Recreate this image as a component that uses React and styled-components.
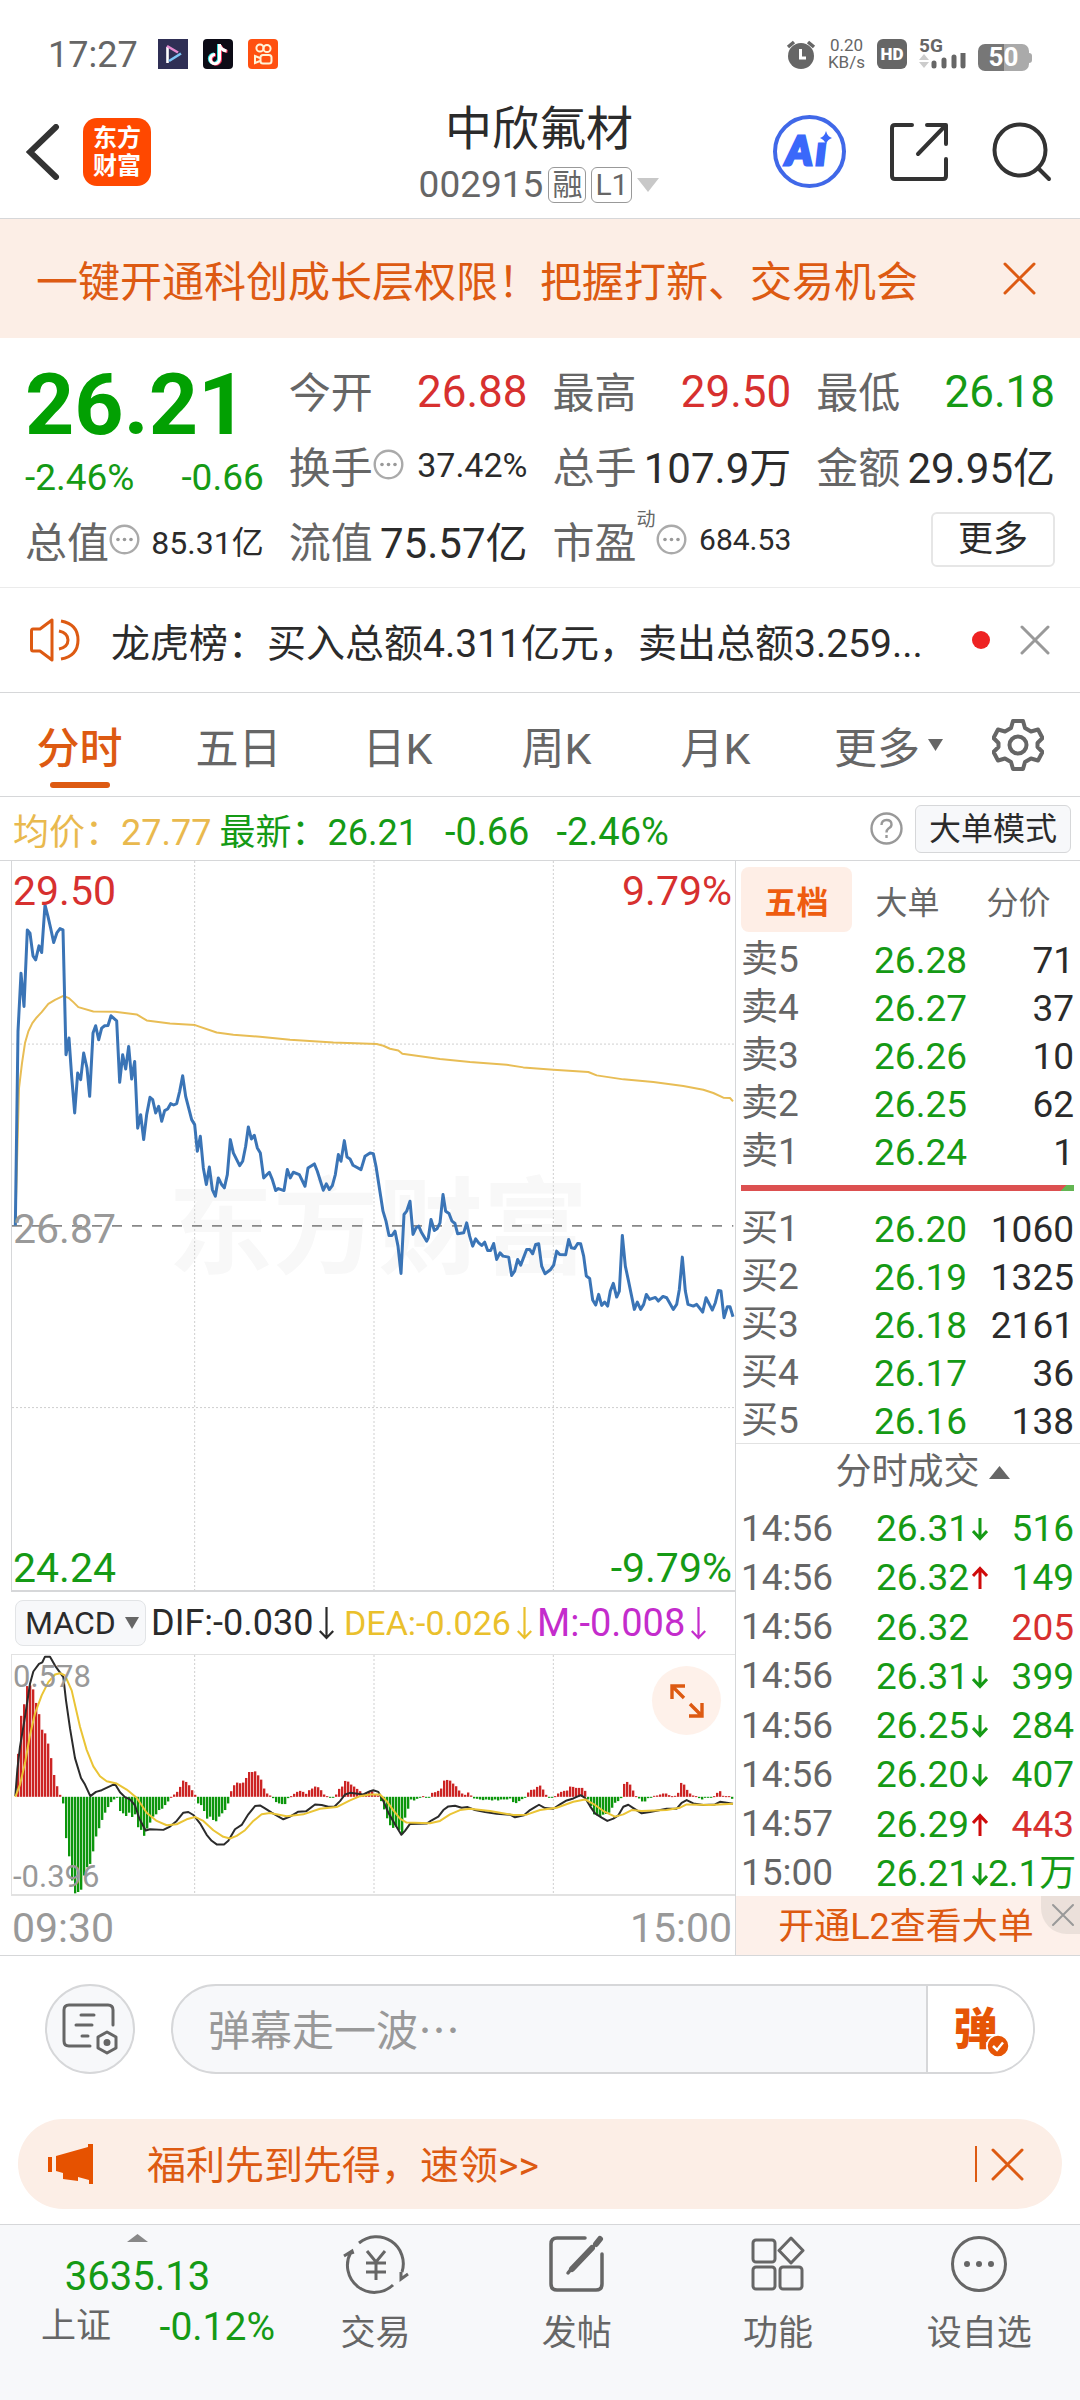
import React from 'react';
import styled, { createGlobalStyle, css } from 'styled-components';

const C = {
  green: '#159a15',
  red: '#d7302f',
  orange: '#dd5a12',
  ink: '#2b2b2b',
  grey: '#666',
  pale: '#999',
  line: '#d6d7d9',
  soft: '#fceee6',
  field: '#f7f8fa',
  gold: '#e9b94e',
};

const Global = createGlobalStyle`
  *, *::before, *::after { box-sizing: border-box; }
  body {
    margin: 0;
    background: #fff;
    color: ${C.ink};
    font-family: Roboto, "Noto Sans CJK SC", sans-serif;
  }
  button, input, select {
    font-family: inherit;
    margin: 0;
    padding: 0;
    border: 0;
    background: none;
    color: inherit;
  }
  svg { display: block; flex: none; }
`;

const Page = styled.div`
  min-height: 100vh;
  display: flex;
  flex-direction: column;
  white-space: nowrap;
`;

/* ---------- status bar ---------- */
const StatusBar = styled.div`
  display: flex;
  align-items: center;
  height: 30px;
  margin-top: 39px;
  padding: 0 48px;
  color: ${C.grey};
`;
const Clock = styled.span`
  font-size: 36px;
  line-height: 34px;
  margin-right: 20px;
  padding-top: 2px;
`;
const StatusApps = styled.div`
  display: flex;
  gap: 15px;
  flex: 1;
`;
const StatusInfo = styled.div`
  display: flex;
  align-items: center;
  gap: 12px;
`;
const Speed = styled.div`
  display: flex;
  flex-direction: column;
  align-items: center;
  font-size: 17px;
  line-height: 17px;
`;
const HdBadge = styled.span`
  width: 30px;
  height: 30px;
  border-radius: 6px;
  background: ${C.grey};
  color: #fff;
  font-size: 17px;
  font-weight: 900;
  line-height: 30px;
  text-align: center;
`;
const Signal = styled.div`
  display: flex;
  flex-direction: column;
  width: 47px;
  height: 30px;
  font-size: 19px;
  font-weight: 700;
  line-height: 14px;
`;
const Battery = styled.div`
  display: flex;
  align-items: center;
  align-self: flex-end;
  &::after {
    content: '';
    width: 3px;
    height: 10px;
    border-radius: 0 3px 3px 0;
    background: #aaa;
  }
`;
const BatteryBody = styled.span`
  width: 51px;
  height: 27px;
  border-radius: 7px;
  background: linear-gradient(to right, #777 50%, #aaa 50%);
  color: #fff;
  font-size: 26px;
  font-weight: 700;
  line-height: 27px;
  text-align: center;
`;

/* ---------- title bar ---------- */
const NavBar = styled.header`
  display: grid;
  grid-template-columns: 1fr auto 1fr;
  align-items: center;
  height: 150px;
  padding: 16px 28px 0 26px;
  border-bottom: 1px solid ${C.line};
`;
const NavSide = styled.div`
  display: flex;
  align-items: center;
  gap: ${p => p.$gap}px;
  justify-content: ${p => (p.$end ? 'flex-end' : 'flex-start')};
`;
const IconButton = styled.button`
  display: flex;
  align-items: center;
  justify-content: center;
  flex: none;
`;
const Brand = styled.div`
  width: 68px;
  height: 68px;
  border-radius: 14px;
  background: #ff4800;
  color: #fff;
  font-size: 24px;
  font-weight: 700;
  line-height: 28px;
  padding-top: 6px;
  text-align: center;
  white-space: normal;
`;
const TitleBlock = styled.div`
  display: flex;
  flex-direction: column;
  align-items: center;
  gap: 12px;
`;
const Title = styled.h1`
  margin: 0;
  padding-top: 3px;
  font-size: 47px;
  font-weight: 400;
  line-height: 52px;
`;
const CodeRow = styled.div`
  display: flex;
  align-items: center;
  gap: 5px;
  font-size: 37px;
  line-height: 36px;
  color: ${C.grey};
`;
const Tag = styled.span`
  height: 36px;
  padding: 0 3px;
  border: 1px solid ${C.pale};
  border-radius: 6px;
  font-size: 30px;
  line-height: 33px;
`;

/* ---------- banner ---------- */
const Banner = styled.div`
  display: flex;
  align-items: center;
  justify-content: space-between;
  height: 119px;
  padding: 0 44px 0 36px;
  background: ${C.soft};
  color: ${C.orange};
  font-size: 42px;
`;

/* ---------- quote ---------- */
const Quote = styled.section`
  display: grid;
  grid-template-columns: repeat(4, 1fr);
  grid-template-rows: repeat(3, 75px);
  column-gap: 25px;
  padding: 14px 25px 10px;
  border-bottom: 1px solid #ebebeb;
`;
const PriceBlock = styled.div`
  grid-row: span 2;
  padding-top: 2px;
  color: ${C.green};
`;
const Price = styled.div`
  padding-top: 2px;
  color: #02a002;
  font-size: 86px;
  font-weight: 700;
  line-height: 98px;
`;
const Change = styled.div`
  display: flex;
  justify-content: space-between;
  font-size: 37px;
  line-height: 48px;
`;
const Stat = styled.div`
  display: flex;
  align-items: center;
  min-width: 0;
`;
const StatLabel = styled.span`
  font-size: 42px;
  color: ${C.grey};
`;
const Sup = styled.sup`
  align-self: flex-start;
  margin-top: 8px;
  font-size: 19px;
  line-height: 20px;
  color: ${C.grey};
`;
const StatValue = styled.span`
  margin-left: auto;
  padding-top: ${p => (p.$size === 44 ? 4 : 0)}px;
  font-size: ${p => p.$size}px;
  color: ${p => p.$color || C.ink};
`;
const MoreButton = styled.button`
  justify-self: end;
  align-self: center;
  width: 124px;
  height: 55px;
  border: 2px solid #e6e6e6;
  border-radius: 6px;
  font-size: 35px;
  line-height: 48px;
`;

/* ---------- notice ---------- */
const Notice = styled.div`
  display: flex;
  align-items: center;
  height: 105px;
  padding: 0 30px;
  border-bottom: 1px solid ${C.line};
`;
const NoticeText = styled.span`
  flex: 1;
  margin-left: 29px;
  font-size: 39px;
`;
const Dot = styled.span`
  width: 18px;
  height: 18px;
  margin-right: 30px;
  border-radius: 50%;
  background: #ee2222;
`;

/* ---------- period tabs ---------- */
const Tabs = styled.nav`
  display: flex;
  height: 104px;
  padding-right: 12px;
  border-bottom: 1px solid ${C.line};
`;
const Tab = styled.button`
  position: relative;
  flex: 1;
  display: flex;
  align-items: center;
  justify-content: center;
  gap: 8px;
  font-size: 43px;
  color: ${C.grey};
  ${p => p.$menu && css`
    padding-left: 14px;
  `}
  ${p => p.$active && css`
    font-weight: 500;
    color: ${C.orange};
    &::after {
      content: '';
      position: absolute;
      bottom: 8px;
      left: 50%;
      width: 60px;
      height: 6px;
      margin-left: -30px;
      border-radius: 3px;
      background: ${C.orange};
    }
  `}
`;
const GearButton = styled(IconButton)`
  width: 100px;
`;

const InfoRow = styled.div`
  display: flex;
  align-items: center;
  height: 64px;
  padding: 0 9px 0 13px;
  border-bottom: 1px solid ${C.line};
  font-size: 36px;
  color: ${C.green};
`;
const Avg = styled.span`
  color: ${C.gold};
  margin-right: 8px;
`;
const Latest = styled.span`
  display: flex;
  align-items: baseline;
  gap: 27px;
  flex: 1;
`;
const Delta = styled.span`
  font-size: 38px;
`;
const ModeButton = styled.button`
  width: 156px;
  height: 48px;
  margin-left: 12px;
  border: 1px solid ${C.line};
  border-radius: 6px;
  background: ${C.field};
  color: ${C.ink};
  font-size: 32px;
  line-height: 44px;
`;

/* ---------- main ---------- */
const Main = styled.main`
  display: flex;
  border-bottom: 1px solid ${C.line};
`;
const ChartColumn = styled.section`
  flex: 1;
  min-width: 0;
  padding-left: 11px;
  border-right: 1px solid ${C.line};
`;
const PriceChart = styled.div`
  position: relative;
  height: 731px;
  border-left: 1px solid ${C.line};
  border-bottom: 2px solid ${C.line};
`;
const MacdChart = styled.div`
  position: relative;
  height: 242px;
  border: 1px solid #e2e2e2;
  border-right: 0;
  border-bottom-width: 2px;
`;
const Plot = styled.svg`
  position: relative;
  width: 100%;
  height: 100%;
`;
const Watermark = styled.div`
  position: absolute;
  left: 156px;
  top: 309px;
  font-size: 105px;
  font-weight: 700;
  line-height: 120px;
  color: #f8f8f8;
`;
const AxisLabel = styled.span`
  position: absolute;
  ${p => p.$side}: ${p => (p.$side === 'left' ? 1 : 3)}px;
  ${p => (p.$bottom === undefined ? `top: ${p.$top}px` : `bottom: ${p.$bottom}px`)};
  font-size: ${p => p.$size || 41}px;
  line-height: 40px;
  color: ${p => p.$color || C.pale};
`;
const MacdRow = styled.div`
  display: grid;
  grid-template-columns: 134px 193px 193px 1fr;
  align-items: center;
  height: 62px;
  padding-left: 4px;
`;
const SelectBox = styled.label`
  position: relative;
  display: block;
  svg { position: absolute; right: 10px; top: 17px; pointer-events: none; }
`;
const Select = styled.select`
  appearance: none;
  width: 131px;
  height: 46px;
  padding-left: 9px;
  border: 1px solid #e2e4e6;
  border-radius: 8px;
  background: ${C.field};
  color: ${C.ink};
  font-size: 32px;
  line-height: 44px;
`;
const Indicator = styled.span`
  display: flex;
  align-items: center;
  gap: 6px;
  padding-left: 2px;
  font-size: ${p => p.$size}px;
  color: ${p => p.$color};
`;
const ExpandButton = styled(IconButton)`
  position: absolute;
  right: 14px;
  top: 11px;
  width: 69px;
  height: 69px;
  border-radius: 50%;
  background: #fef1ea;
`;
const TimeAxis = styled.div`
  display: flex;
  justify-content: space-between;
  align-items: center;
  height: 59px;
  padding: 4px 3px 0 1px;
  font-size: 41px;
  line-height: 50px;
  color: ${C.pale};
`;

/* ---------- order book ---------- */
const BookColumn = styled.aside`
  width: 344px;
  display: flex;
  flex-direction: column;
`;
const BookTabs = styled.div`
  display: grid;
  grid-template-columns: 111px 111px 111px;
  padding: 6px 0 2px 5px;
`;
const BookTab = styled.button`
  height: 65px;
  border-radius: 8px;
  font-size: 32px;
  color: ${C.grey};
  ${p => p.$active && css`
    background: #feeee6;
    color: #ee5c10;
    font-weight: 700;
  `}
`;
const Table = styled.table`
  width: 100%;
  height: ${p => p.$height}px;
  border-collapse: collapse;
  table-layout: fixed;
  font-size: 37px;
  line-height: 40px;
`;
const Cell = styled.td`
  padding: 5px 0 0;
  width: ${p => p.$width}px;
  text-align: right;
  color: ${p => p.$color || C.ink};
`;
const HeadCell = styled.th`
  width: 101px;
  padding: 4px 0 0 5px;
  font-size: 37px;
  font-weight: 400;
  text-align: left;
  color: ${C.grey};
`;
const VolumeCell = styled(Cell)`
  padding-right: 6px;
`;
const Ratio = styled.div`
  height: 6px;
  margin: 11px 6px 12px 5px;
  background: linear-gradient(135deg, #dc5050 96%, #63b552 96%);
`;
const TradesTitle = styled.button`
  display: flex;
  align-items: center;
  justify-content: center;
  gap: 9px;
  height: 59px;
  padding: 0 0 2px 29px;
  border-top: 1px solid #e2e2e2;
  font-size: 36px;
  line-height: 50px;
  color: ${C.grey};
`;
const PriceWithArrow = styled.span`
  display: flex;
  align-items: center;
  justify-content: flex-end;
  gap: 3px;
`;
const ArrowSlot = styled.span`
  width: 16px;
`;
const Level2 = styled.div`
  position: relative;
  flex: 1;
  display: flex;
  background: #fdf0ea;
`;
const Level2Link = styled.a`
  flex: 1;
  padding: 4px 4px 0 0;
  color: ${C.orange};
  font-size: 36px;
  line-height: 55px;
  text-align: center;
  text-decoration: none;
`;
const Level2Close = styled(IconButton)`
  position: absolute;
  top: 0;
  right: 0;
  width: 39px;
  height: 38px;
  padding-left: 4px;
  border-bottom-left-radius: 26px;
  background: #ebe0da;
`;

/* ---------- comments ---------- */
const CommentRow = styled.form`
  display: flex;
  gap: 36px;
  padding: 28px 45px 45px;
`;
const RoundButton = styled(IconButton)`
  width: 90px;
  height: 90px;
  border: 2px solid ${C.line};
  border-radius: 50%;
  background: ${C.field};
`;
const CommentField = styled.div`
  flex: 1;
  display: flex;
  height: 90px;
  border: 2px solid ${C.line};
  border-radius: 45px;
  background: ${C.field};
  overflow: hidden;
`;
const CommentInput = styled.input`
  flex: 1;
  min-width: 0;
  padding: 0 0 3px 35px;
  font-family: "Noto Sans CJK SC", sans-serif;
  font-size: 42px;
  outline: 0;
  &::placeholder { color: ${C.pale}; opacity: 1; }
`;
const BulletToggle = styled.button`
  position: relative;
  width: 107px;
  padding: 0 10px 6px 0;
  border-left: 2px solid ${C.line};
  background: #fff;
  color: #e65506;
  font-size: 44px;
  font-weight: 900;
  svg { position: absolute; left: 58px; top: 48px; }
`;

const Promo = styled.div`
  display: flex;
  align-items: center;
  height: 90px;
  margin: 0 18px 15px;
  padding: 0 38px 0 30px;
  border-radius: 45px;
  background: ${C.soft};
  color: ${C.orange};
  font-size: 39px;
`;
const PromoText = styled.span`
  flex: 1;
  margin-left: 53px;
  padding-bottom: 4px;
`;
const Divider = styled.span`
  width: 2px;
  height: 36px;
  margin-right: 14px;
  background: ${C.orange};
`;

/* ---------- bottom bar ---------- */
const BottomBar = styled.footer`
  flex: 1;
  display: grid;
  grid-template-columns: 275px repeat(4, 1fr);
  border-top: 1px solid ${C.line};
  background: ${C.field};
  color: ${C.grey};
`;
const IndexBlock = styled.div`
  display: flex;
  flex-direction: column;
  align-items: center;
  padding-top: 9px;
  color: ${C.green};
`;
const IndexValue = styled.div`
  margin-top: 10px;
  font-size: 40px;
  line-height: 50px;
`;
const IndexRow = styled.div`
  display: flex;
  align-items: center;
  justify-content: space-between;
  align-self: stretch;
  padding-left: 41px;
  font-size: 39px;
  line-height: 50px;
`;
const IndexName = styled.span`
  font-size: 35px;
  color: ${C.grey};
`;
const NavItem = styled.button`
  display: flex;
  flex-direction: column;
  align-items: center;
  gap: 15px;
  padding-top: 9px;
  font-size: 35px;
  line-height: 50px;
`;

/* ---------- icons ---------- */
const Cross = ({ size, width = 3, color = 'currentColor' }) => (
  <svg width={size} height={size} viewBox={`0 0 ${size} ${size}`} stroke={color} strokeWidth={width} strokeLinecap="round">
    <path d={`M2 2L${size - 2} ${size - 2}M${size - 2} 2L2 ${size - 2}`} />
  </svg>
);
const Triangle = ({ w, h, up, color = C.grey }) => (
  <svg width={w} height={h} viewBox="0 0 10 10" preserveAspectRatio="none" fill={color}>
    <path d={up ? 'M0 10L5 0L10 10Z' : 'M0 0H10L5 10Z'} />
  </svg>
);
const Ellipsis = () => (
  <svg width="31" height="31" viewBox="0 0 31 31" fill="none" stroke="#aaa" strokeWidth="2.4">
    <circle cx="15.5" cy="15.5" r="13.8" />
    <g fill="#999" stroke="none">
      <circle cx="9" cy="15.5" r="1.8" /><circle cx="15.5" cy="15.5" r="1.8" /><circle cx="22" cy="15.5" r="1.8" />
    </g>
  </svg>
);
const LongArrow = () => (
  <svg width="15" height="33" viewBox="0 0 15 33" fill="none" stroke="currentColor" strokeWidth="2.2">
    <path d="M7.5 0V31M0.8 24L7.5 31L14.2 24" />
  </svg>
);
const TickArrow = ({ dir }) => (
  <svg width="16" height="24" viewBox="0 0 16 24" fill="none" stroke={dir === 'up' ? '#cf0a0a' : C.green} strokeWidth="3">
    <path d={dir === 'up' ? 'M8 23V3M1 10L8 2.5L15 10' : 'M8 1V21M1 14L8 21.5L15 14'} />
  </svg>
);

/* ---------- data ---------- */
const priceLine = '46,1129 54,545 63,370 72,470 82,240 90,250 99,318 107,330 117,288 125,308 135,165 144,200 152,235 161,278 171,248 180,236 189,240 198,615 207,565 215,680 224,790 233,670 242,690 251,610 261,655 269,740 279,550 287,528 296,570 305,535 314,528 324,527 333,498 350,513 359,698 368,615 377,658 386,590 395,688 404,635 413,836 422,795 431,870 440,795 450,743 458,750 467,790 476,770 485,815 494,783 503,778 512,762 521,766 530,762 539,725 548,678 557,740 575,810 584,825 592,905 601,860 610,955 619,1005 628,952 637,1020 646,1040 655,985 665,1005 673,1015 682,975 691,870 700,910 719,948 728,935 737,890 745,832 754,868 763,857 772,895 781,910 791,985 808,968 817,990 827,1023 835,1017 852,1023 862,960 871,985 880,968 898,975 915,1010 924,955 943,943 952,965 970,1022 979,1003 988,1020 997,1008 1006,975 1015,915 1023,935 1033,873 1041,922 1050,928 1059,947 1083,960 1095,920 1110,910 1120,912 1128,950 1142,1040 1149,1085 1158,1115 1167,1158 1176,1158 1185,1145 1194,1190 1203,1272 1212,1095 1220,1085 1230,1055 1239,1155 1248,1135 1256,1130 1265,1150 1280,1175 1285,1165 1293,1110 1303,1143 1311,1138 1320,1120 1329,1035 1337,1085 1347,1092 1356,1115 1365,1122 1373,1153 1391,1150 1400,1120 1409,1160 1418,1190 1427,1168 1436,1180 1445,1188 1454,1178 1463,1203 1472,1203 1481,1182 1490,1230 1500,1210 1509,1220 1526,1223 1535,1278 1544,1265 1553,1230 1562,1247 1580,1200 1589,1200 1598,1213 1607,1185 1616,1183 1625,1250 1635,1273 1652,1260 1661,1247 1670,1205 1679,1215 1697,1216 1706,1170 1714,1195 1724,1197 1733,1182 1742,1183 1751,1220 1759,1280 1769,1287 1778,1352 1787,1367 1796,1335 1805,1368 1814,1358 1823,1370 1831,1325 1840,1302 1850,1343 1858,1325 1867,1158 1876,1250 1885,1292 1903,1380 1912,1358 1922,1380 1931,1365 1939,1335 1949,1350 1966,1344 1975,1355 1989,1341 2000,1345 2020,1380 2030,1365 2038,1320 2047,1223 2056,1325 2064,1365 2080,1370 2090,1365 2108,1388 2118,1345 2137,1382 2146,1360 2155,1323 2163,1325 2172,1405 2182,1372 2190,1372 2199,1402';
const avgLine = '46,1129 57,715 66,640 75,580 85,545 97,520 110,503 125,487 145,462 165,450 190,438 207,445 220,457 235,472 280,485 345,486 410,494 440,512 510,521 585,526 650,548 700,555 780,561 870,570 1000,578 1130,583 1150,588 1170,597 1195,602 1207,612 1320,628 1410,637 1520,645 1570,653 1660,660 1765,667 1790,677 1870,689 1960,697 2050,709 2110,720 2140,730 2170,744 2190,745 2199,755';
const difLine = '46,770 52,690 60,620 75,530 90,430 100,393 117,370 127,365 135,348 150,348 165,375 190,410 198,480 210,565 225,655 243,715 255,735 271,770 288,757 305,752 345,733 360,758 375,773 390,780 405,798 418,838 437,874 450,870 490,872 510,862 530,845 550,820 565,818 580,827 600,852 620,887 635,905 650,916 672,916 685,905 705,870 725,857 745,825 765,800 780,798 795,807 815,820 850,840 870,832 895,817 918,816 945,795 965,797 985,802 1003,802 1020,785 1035,765 1050,760 1090,765 1110,755 1120,752 1135,757 1150,785 1165,820 1185,855 1204,887 1215,875 1230,854 1280,853 1295,843 1315,832 1330,812 1345,801 1365,799 1385,805 1403,803 1425,812 1455,818 1490,823 1530,826 1545,834 1572,828 1590,812 1605,803 1617,796 1635,806 1660,808 1680,795 1700,783 1720,777 1742,767 1755,775 1770,800 1785,822 1805,835 1822,845 1840,838 1855,828 1870,802 1885,796 1900,806 1925,822 1950,818 2000,808 2030,808 2045,790 2060,782 2080,792 2110,797 2145,795 2160,787 2180,790 2199,793';
const deaLine = '46,772 60,735 75,670 90,585 105,520 125,465 145,425 165,402 180,398 195,405 215,450 240,560 260,630 280,680 300,710 320,725 350,732 380,750 410,775 440,820 470,845 500,858 530,855 560,840 585,833 610,845 640,873 670,893 690,898 710,890 735,873 760,845 785,825 810,821 860,831 910,825 960,808 1010,803 1050,783 1080,770 1110,765 1140,765 1160,785 1180,813 1200,838 1220,850 1290,852 1320,845 1350,825 1380,812 1410,808 1470,815 1540,827 1580,826 1620,812 1670,805 1720,787 1755,780 1780,793 1810,815 1845,832 1870,825 1895,812 1925,815 2000,812 2040,805 2060,795 2130,797 2199,793';
const ZERO = 772;
const macdEnds = [
  642, 527, 492, 437, 435, 447, 488, 522, 569, 580, 611, 655, 706, 740, 766, 792, 897, 952, 1025, 1064, 1060, 1053, 1010, 985, 975,
  937, 892, 867, 842, 820, 803, 788, 780, 774, 815, 822, 830, 820, 833, 825, 864, 872, 890, 868, 850, 832, 825, 812, 808, 797, 786,
  772, 765, 757, 742, 723, 727, 737, 752, 766, 792, 797, 815, 838, 832, 842, 846, 832, 822, 812, 792, 755, 737, 729, 731, 729, 715,
  697, 697, 695, 707, 720, 747, 762, 768, 776, 788, 792, 794, 794, 776, 770, 763, 757, 754, 757, 763, 752, 747, 741, 743, 752, 765,
  770, 773, 773, 765, 748, 741, 724, 726, 735, 741, 748, 755, 766, 760, 755, 755, 765, 768, 785, 810, 837, 858, 866, 862, 872, 885,
  835, 808, 780, 783, 778, 773, 770, 775, 775, 760, 758, 754, 747, 723, 721, 723, 732, 740, 753, 762, 766, 759, 768, 777, 778, 780,
  782, 780, 781, 783, 780, 783, 780, 780, 780, 777, 788, 791, 785, 779, 774, 759, 751, 750, 742, 738, 750, 766, 773, 773, 770, 762,
  757, 754, 753, 741, 742, 745, 745, 745, 754, 780, 800, 825, 828, 832, 826, 824, 820, 805, 790, 785, 776, 733, 727, 735, 753, 770,
  777, 786, 786, 776, 773, 769, 768, 765, 762, 762, 767, 770, 769, 760, 730, 735, 751, 762, 768, 770, 776, 780, 773, 773, 775, 770,
  760, 755, 769, 770, 770, 778,
];
const asks = [['卖5', '26.28', '71'], ['卖4', '26.27', '37'], ['卖3', '26.26', '10'], ['卖2', '26.25', '62'], ['卖1', '26.24', '1']];
const bids = [['买1', '26.20', '1060'], ['买2', '26.19', '1325'], ['买3', '26.18', '2161'], ['买4', '26.17', '36'], ['买5', '26.16', '138']];
const trades = [
  ['14:56', '26.31', 'down', '516', C.green],
  ['14:56', '26.32', 'up', '149', C.green],
  ['14:56', '26.32', '', '205', C.red],
  ['14:56', '26.31', 'down', '399', C.green],
  ['14:56', '26.25', 'down', '284', C.green],
  ['14:56', '26.20', 'down', '407', C.green],
  ['14:57', '26.29', 'up', '443', C.red],
  ['15:00', '26.21', 'down', '2.1万', C.green],
];

const Item = ({ label, value, size = 42, color, info, sup }) => (
  <Stat>
    <StatLabel>{label}</StatLabel>
    {sup && <Sup>{sup}</Sup>}
    {info && <Ellipsis />}
    <StatValue $size={size} $color={color}>{value}</StatValue>
  </Stat>
);

const Ladder = ({ rows, label }) => (
  <Table $height={240} aria-label={label}>
    <tbody>
      {rows.map(([name, price, volume]) => (
        <tr key={name}>
          <HeadCell scope="row">{name}</HeadCell>
          <Cell $width={130} $color={C.green}>{price}</Cell>
          <VolumeCell>{volume}</VolumeCell>
        </tr>
      ))}
    </tbody>
  </Table>
);

const Grid = ({ top, bottom, rows = [] }) => (
  <g stroke="#cfcfcf" strokeWidth="1" strokeDasharray="2 2" fill="none">
    {[584, 1122, 1660].map(x => <path key={x} d={`M${x} ${top}V${bottom}`} vectorEffect="non-scaling-stroke" />)}
    {rows.map(y => <path key={y} d={`M36 ${y}H2205`} vectorEffect="non-scaling-stroke" />)}
  </g>
);

export default function App() {
  return (
    <Page lang="zh-CN">
      <Global />
      <StatusBar>
        <Clock>17:27</Clock>
        <StatusApps>
          <svg width="30" height="30" viewBox="0 0 30 30" fill="none" strokeWidth="2.6">
            <rect width="30" height="30" fill="#2f2f55" />
            <path d="M9.5 24V8" stroke="#fff" />
            <path d="M9 7L20 13.5" stroke="#e58bd0" />
            <path d="M11 22L23 14.5" stroke="#7cc4f5" />
          </svg>
          <svg width="30" height="30" viewBox="0 0 30 30" fill="none" strokeWidth="3">
            <rect width="30" height="30" rx="4" fill="#0c0b16" />
            <path d="M15.5 5V19.5A4.6 4.6 0 1 1 11 15M15.5 5.5C16.5 9 19 11 22.5 11.5" stroke="#35e0e0" />
            <path d="M17.5 6V20.5A4.6 4.6 0 1 1 13 16M17.5 6.5C18.5 10 21 12 24.5 12.5" stroke="#f0365c" />
            <path d="M16.5 5V20A4.6 4.6 0 1 1 12 15.5M16.5 6C17.5 9.5 20 11.5 23.5 12" stroke="#fff" />
          </svg>
          <svg width="30" height="30" viewBox="0 0 30 30" fill="none" stroke="#fff3d8" strokeWidth="2">
            <rect width="30" height="30" rx="4" fill="#ff5010" stroke="none" />
            <circle cx="12" cy="9" r="3.6" /><circle cx="19" cy="9.5" r="3.6" />
            <rect x="12.5" y="16" width="11" height="8.5" rx="2.5" />
            <path d="M12 19L7 17V24L12 22" />
          </svg>
        </StatusApps>
        <StatusInfo>
          <svg width="30" height="30" viewBox="0 0 30 30">
            <circle cx="15" cy="17" r="13" fill={C.grey} />
            <path d="M2 8L8 3M28 8L22 3" stroke={C.grey} strokeWidth="3.5" />
            <path d="M14.5 10V19H20" stroke="#fff" strokeWidth="3" fill="none" />
          </svg>
          <Speed><span>0.20</span><span>KB/s</span></Speed>
          <HdBadge>HD</HdBadge>
          <Signal>
            5G
            <svg width="47" height="16" viewBox="0 0 47 16">
              <path d="M0 7L5 1L10 7ZM0 9H10L5 15Z" fill="#ccc" />
              <path d="M15 13V10M25 13V7M35 13V4M44 13V0" stroke={C.grey} strokeWidth="5" strokeLinecap="round" />
            </svg>
          </Signal>
          <Battery><BatteryBody>50</BatteryBody></Battery>
        </StatusInfo>
      </StatusBar>

      <NavBar>
        <NavSide $gap={23}>
          <IconButton aria-label="返回">
            <svg width="34" height="56" viewBox="0 0 34 56" fill="none" stroke="#333" strokeWidth="6" strokeLinecap="round">
              <path d="M30 3L4 28L30 53" />
            </svg>
          </IconButton>
          <Brand>东方<br />财富</Brand>
        </NavSide>
        <TitleBlock>
          <Title>中欣氟材</Title>
          <CodeRow>
            <span>002915</span>
            <Tag>融</Tag>
            <Tag>L1</Tag>
            <Triangle w={22} h={14} color="#c8c8c8" />
          </CodeRow>
        </TitleBlock>
        <NavSide $gap={44} $end>
          <IconButton aria-label="Ai">
            <svg width="73" height="73" viewBox="0 0 73 73">
              <circle cx="36.5" cy="36.5" r="34.5" fill="none" stroke="#4068e8" strokeWidth="4" />
              <g fill="#3a68fa" stroke="#3a68fa" strokeWidth="3" fontFamily="Lato, sans-serif" fontSize="40" fontWeight="900" fontStyle="italic">
                <text x="13" y="50">A</text>
                <text x="43" y="50">ı</text>
              </g>
              <path d="M53 16Q54.500 21.500 59 23Q54.500 24.500 53 29Q51 24.500 47 23Q51.500 21.500 53 16Z" fill="#3a68fa" />
            </svg>
          </IconButton>
          <IconButton aria-label="分享">
            <svg width="58" height="58" viewBox="0 0 58 58" fill="none" stroke="#333" strokeWidth="4" strokeLinecap="round" strokeLinejoin="round">
              <path d="M22 2H5Q2 2 2 5V53Q2 56 5 56H53Q56 56 56 53V36M37 2H56V21M55 3L28 31" />
            </svg>
          </IconButton>
          <IconButton aria-label="搜索">
            <svg width="60" height="60" viewBox="0 0 60 60" fill="none" stroke="#333" strokeWidth="4" strokeLinecap="round">
              <circle cx="28" cy="28" r="25.5" /><path d="M46 46L57 57" />
            </svg>
          </IconButton>
        </NavSide>
      </NavBar>

      <Banner>
        <span>一键开通科创成长层权限！把握打新、交易机会</span>
        <IconButton aria-label="关闭"><Cross size={33} /></IconButton>
      </Banner>

      <Quote>
        <PriceBlock>
          <Price>26.21</Price>
          <Change><span>-2.46%</span><span>-0.66</span></Change>
        </PriceBlock>
        <Item label="今开" value="26.88" size={44} color={C.red} />
        <Item label="最高" value="29.50" size={44} color={C.red} />
        <Item label="最低" value="26.18" size={44} color={C.green} />
        <Item label="换手" value="37.42%" size={34} info />
        <Item label="总手" value="107.9万" />
        <Item label="金额" value="29.95亿" />
        <Item label="总值" value="85.31亿" size={32} info />
        <Item label="流值" value="75.57亿" />
        <Item label="市盈" value="684.53" size={30} info sup="动" />
        <MoreButton>更多</MoreButton>
      </Quote>

      <Notice>
        <svg width="52" height="44" viewBox="0 0 52 44" fill="none" stroke={C.orange} strokeWidth="3" strokeLinejoin="round">
          <path d="M3 11H10L22 2V42L10 33H3Q1.500 33 1.500 31V13Q1.500 11 3 11Z" />
          <path d="M29 13Q38 15 38 22Q38 29 29 31M31 3Q48 6 48 22Q48 38 31 41" />
        </svg>
        <NoticeText>龙虎榜：买入总额4.311亿元，卖出总额3.259...</NoticeText>
        <Dot />
        <IconButton aria-label="关闭"><Cross size={30} color="#999" /></IconButton>
      </Notice>

      <Tabs>
        <Tab $active>分时</Tab>
        <Tab>五日</Tab>
        <Tab>日K</Tab>
        <Tab>周K</Tab>
        <Tab>月K</Tab>
        <Tab $menu>更多<Triangle w={15} h={12} /></Tab>
        <GearButton aria-label="设置">
          <svg width="52" height="52" viewBox="0 0 52 52" fill="none" stroke={C.grey} strokeWidth="4" strokeLinejoin="round">
            <path d="M21 2H31L33 9L39 12.500L46 10.500L50.500 19L45.500 24V28L50.500 33L46 41.500L39 39.500L33 43L31 50H21L19 43L13 39.500L6 41.500L1.500 33L6.500 28V24L1.500 19L6 10.500L13 12.500L19 9Z" />
            <circle cx="26" cy="26" r="8.500" />
          </svg>
        </GearButton>
      </Tabs>

      <InfoRow>
        <Avg>均价：27.77</Avg>
        <Latest><span>最新：26.21</span><Delta>-0.66</Delta><Delta>-2.46%</Delta></Latest>
        <svg width="33" height="33" viewBox="0 0 33 33" fill="none" stroke="#999" strokeWidth="2.4">
          <circle cx="16.500" cy="16.500" r="15" />
          <path d="M11.500 13Q11.500 8 16.500 8Q21.500 8 21.500 12.500Q21.500 15 18.500 16.500Q16.500 18 16.500 20.500M16.500 23V26" />
        </svg>
        <ModeButton>大单模式</ModeButton>
      </InfoRow>

      <Main>
        <ChartColumn>
          <PriceChart>
            <Watermark>东方财富</Watermark>
            <Plot viewBox="36 33 2169 2190" preserveAspectRatio="none" fill="none">
              <Grid top={33} bottom={2223} rows={[583, 1675]} />
              <path d="M36 1129H2200" stroke="#888" strokeWidth="5" strokeDasharray="30 30" />
              <polyline points={avgLine} stroke="#e8bd55" strokeWidth="6" strokeLinejoin="round" />
              <polyline points={priceLine} stroke="#3a74b6" strokeWidth="9" strokeLinejoin="round" />
            </Plot>
            <AxisLabel $side="left" $top={10} $color={C.red}>29.50</AxisLabel>
            <AxisLabel $side="right" $top={10} $color={C.red}>9.79%</AxisLabel>
            <AxisLabel $side="left" $top={348}>26.87</AxisLabel>
            <AxisLabel $side="left" $bottom={2} $color={C.green}>24.24</AxisLabel>
            <AxisLabel $side="right" $bottom={2} $color={C.green}>-9.79%</AxisLabel>
          </PriceChart>
          <MacdRow>
            <SelectBox>
              <Select aria-label="指标" defaultValue="MACD"><option>MACD</option></Select>
              <Triangle w={14} h={12} />
            </SelectBox>
            <Indicator $size={36} $color={C.ink}>DIF:-0.030<LongArrow /></Indicator>
            <Indicator $size={34} $color="#eac02c">DEA:-0.026<LongArrow /></Indicator>
            <Indicator $size={38} $color="#c42ccc">M:-0.008<LongArrow /></Indicator>
          </MacdRow>
          <MacdChart>
            <Plot viewBox="36 343 2169 723" preserveAspectRatio="none" fill="none">
              <Grid top={343} bottom={1066} />
              {macdEnds.map((y, i) => (
                <rect
                  key={i}
                  x={51 + i * 9}
                  y={Math.min(y, ZERO)}
                  width="7"
                  height={Math.max(3, Math.abs(y - ZERO))}
                  fill={y > ZERO ? '#0c960c' : '#cc2424'}
                />
              ))}
              <polyline points={difLine} stroke="#2b2b2b" strokeWidth="6" strokeLinejoin="round" />
              <polyline points={deaLine} stroke="#eac435" strokeWidth="6" strokeLinejoin="round" />
            </Plot>
            <AxisLabel $side="left" $top={2} $size={31}>0.578</AxisLabel>
            <AxisLabel $side="left" $bottom={-3} $size={31}>-0.396</AxisLabel>
            <ExpandButton aria-label="全屏">
              <svg width="34" height="34" viewBox="0 0 34 34" fill="none" stroke={C.orange} strokeWidth="3.4">
                <path d="M2 15V2H15M3 3L14 14M19 32H32V19M31 31L20 20" />
              </svg>
            </ExpandButton>
          </MacdChart>
          <TimeAxis><span>09:30</span><span>15:00</span></TimeAxis>
        </ChartColumn>

        <BookColumn>
          <BookTabs>
            <BookTab $active>五档</BookTab>
            <BookTab>大单</BookTab>
            <BookTab>分价</BookTab>
          </BookTabs>
          <Ladder rows={asks} label="卖盘" />
          <Ratio />
          <Ladder rows={bids} label="买盘" />
          <TradesTitle>分时成交<Triangle w={21} h={13} up /></TradesTitle>
          <Table $height={394} aria-label="分时成交">
            <tbody>
              {trades.map(([time, price, dir, volume, color], i) => (
                <tr key={i}>
                  <HeadCell scope="row">{time}</HeadCell>
                  <Cell $width={151} $color={C.green}>
                    <PriceWithArrow>
                      {price}
                      <ArrowSlot>{dir && <TickArrow dir={dir} />}</ArrowSlot>
                    </PriceWithArrow>
                  </Cell>
                  <VolumeCell $color={color}>{volume}</VolumeCell>
                </tr>
              ))}
            </tbody>
          </Table>
          <Level2>
            <Level2Link href="#level2">开通L2查看大单</Level2Link>
            <Level2Close aria-label="关闭"><Cross size={24} width={2} color="#999" /></Level2Close>
          </Level2>
        </BookColumn>
      </Main>

      <CommentRow onSubmit={e => e.preventDefault()}>
        <RoundButton type="button" aria-label="弹幕设置">
          <svg width="56" height="52" viewBox="0 0 56 52" fill="none" stroke={C.grey} strokeWidth="3" strokeLinecap="round" strokeLinejoin="round">
            <path d="M28 43H7Q2 43 2 38V7Q2 2 7 2H46Q51 2 51 7V22M19 12H32M14 22H30M20 33H26" />
            <path d="M45 29L54 34V45L45 50L36 45V34Z" />
            <circle cx="45" cy="39.500" r="2" fill={C.grey} />
          </svg>
        </RoundButton>
        <CommentField>
          <CommentInput aria-label="弹幕" placeholder="弹幕走一波…" />
          <BulletToggle type="button">
            弹
            <svg width="24" height="24" viewBox="0 0 24 24">
              <circle cx="12" cy="12" r="11" fill="#e65506" stroke="#fff" strokeWidth="1.500" />
              <path d="M7 12L11 16L17 8.500" fill="none" stroke="#fff" strokeWidth="2.500" />
            </svg>
          </BulletToggle>
        </CommentField>
      </CommentRow>

      <Promo>
        <svg width="46" height="40" viewBox="0 0 46 40" fill="#e65200">
          <path d="M0 13H4V28H0ZM8 12L40 3V0H45V40H41V36L30 33V37L15 35V29L8 27Z" />
        </svg>
        <PromoText>福利先到先得，速领&gt;&gt;</PromoText>
        <Divider />
        <IconButton aria-label="关闭"><Cross size={33} /></IconButton>
      </Promo>

      <BottomBar>
        <IndexBlock>
          <Triangle w={21} h={8} up color="#888" />
          <IndexValue>3635.13</IndexValue>
          <IndexRow><IndexName>上证</IndexName><span>-0.12%</span></IndexRow>
        </IndexBlock>
        <NavItem>
          <svg width="66" height="60" viewBox="0 0 66 60" fill="none" stroke={C.grey} strokeWidth="3">
            <path d="M16 9A27 27 0 0 1 59 38M50 51A27 27 0 0 1 8 18M1 22L9 17L10 20M65 40L58 45L58 38" />
            <path d="M24 17L33 28L42 17M33 28V46M23 29H43M23 38H43" />
          </svg>
          交易
        </NavItem>
        <NavItem>
          <svg width="58" height="60" viewBox="0 0 58 60" fill="none" stroke={C.grey} strokeWidth="3.500" strokeLinecap="round">
            <path d="M37 4H9Q3 4 3 10V50Q3 56 9 56H48Q54 56 54 50V20" />
            <path d="M52 5L48 10M44 14L24 35" strokeWidth="6" /><path d="M24 34L20 39" />
          </svg>
          发帖
        </NavItem>
        <NavItem>
          <svg width="54" height="60" viewBox="0 0 54 60" fill="none" stroke={C.grey} strokeWidth="3" strokeLinejoin="round">
            <rect x="2" y="6" width="22" height="22" rx="3" />
            <rect x="2" y="33" width="22" height="22" rx="3" />
            <rect x="29" y="33" width="22" height="22" rx="3" />
            <path d="M40 4L52 16.500L40 29L28 16.500Z" />
          </svg>
          功能
        </NavItem>
        <NavItem>
          <svg width="60" height="60" viewBox="0 0 60 60" fill="none" stroke={C.grey} strokeWidth="3">
            <circle cx="30" cy="30" r="26.500" />
            <g fill={C.grey} stroke="none"><circle cx="18" cy="30" r="3" /><circle cx="30" cy="30" r="3" /><circle cx="42" cy="30" r="3" /></g>
          </svg>
          设自选
        </NavItem>
      </BottomBar>
    </Page>
  );
}
